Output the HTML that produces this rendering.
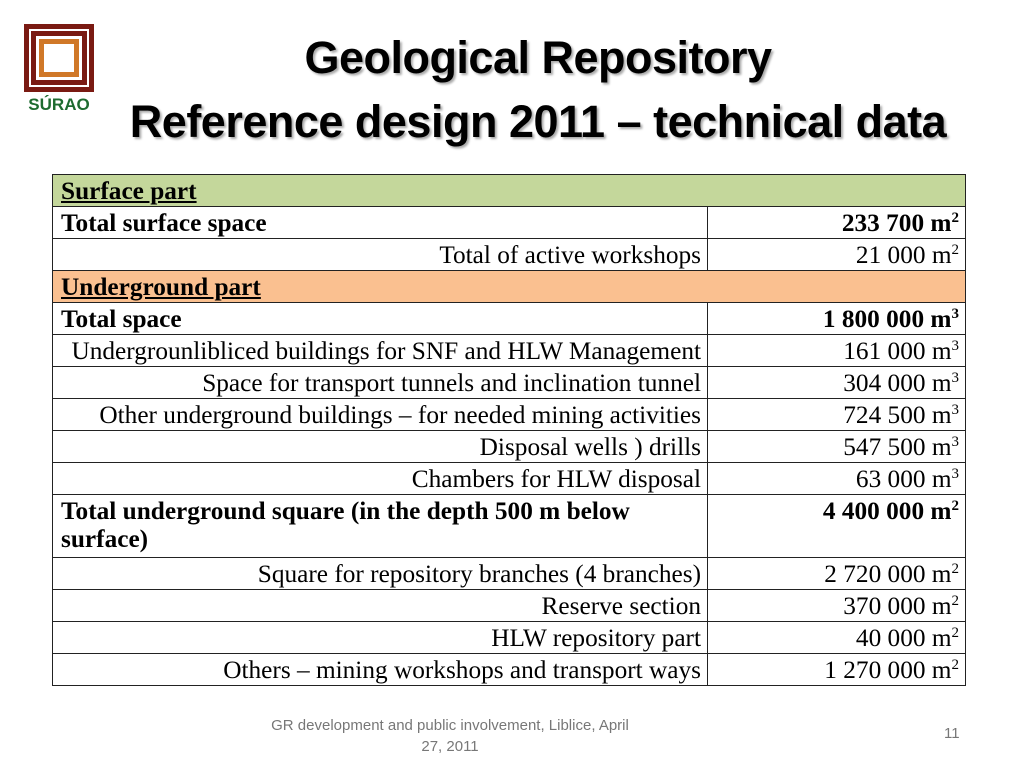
<!DOCTYPE html>
<html><head><meta charset="utf-8"><style>
body{margin:0;width:1024px;height:768px;background:#fff;position:relative;overflow:hidden;font-family:"Liberation Serif","Times New Roman",serif;}
.t{position:absolute;left:0;width:1076px;text-align:center;font-family:"Liberation Sans",sans-serif;font-weight:bold;font-size:45px;line-height:50px;color:#000;text-shadow:2px 2px 2px #aaa;letter-spacing:-0.5px;white-space:nowrap}
table{position:absolute;left:52px;top:174px;width:914px;border-collapse:collapse;font-size:25.3px}
td{border:1.5px solid #222;padding:0 6px 0 8px;height:31px;line-height:28px;vertical-align:middle;white-space:nowrap}
td:first-child{width:640px;text-align:right}
td:last-child{text-align:right}
.l{text-align:left!important}
.g td{background:#c4d79b}.o td{background:#fac090}
sup{font-size:15px;vertical-align:9px;line-height:0}
.f{position:absolute;font-family:"Liberation Sans",sans-serif;font-size:15px;color:#777}
</style></head><body>
<svg style="position:absolute;left:24px;top:24px" width="72" height="90">
<rect x="0" y="0" width="70" height="68" fill="#7a1a12"/>
<rect x="6" y="6" width="58" height="56" fill="none" stroke="#fff" stroke-width="2"/>
<rect x="12" y="12" width="46" height="44" fill="#fff"/>
<rect x="15" y="15" width="40" height="38" fill="#d07828"/>
<rect x="20" y="20" width="30" height="28" fill="#fff"/>
<text x="35" y="86" text-anchor="middle" font-family="Liberation Sans" font-weight="bold" font-size="17" fill="#1e6b30">SÚRAO</text>
</svg>
<div class="t" style="top:33px">Geological Repository</div>
<div class="t" style="top:97px">Reference design 2011 – technical data</div>
<table>
<tr class="g"><td class="l" colspan="2"><b><u>Surface part</u></b></td></tr>
<tr><td class="l"><b>Total surface space</b></td><td><b>233 700 m<sup>2</sup></b></td></tr>
<tr><td>Total of active workshops</td><td>21 000 m<sup>2</sup></td></tr>
<tr class="o"><td class="l" colspan="2"><b><u>Underground part</u></b></td></tr>
<tr><td class="l"><b>Total space</b></td><td><b>1 800 000 m<sup>3</sup></b></td></tr>
<tr><td>Undergrounlibliced buildings for SNF and HLW Management</td><td>161 000 m<sup>3</sup></td></tr>
<tr><td>Space for transport tunnels and inclination tunnel</td><td>304 000 m<sup>3</sup></td></tr>
<tr><td>Other underground buildings – for needed mining activities</td><td>724 500 m<sup>3</sup></td></tr>
<tr><td>Disposal wells ) drills</td><td>547 500 m<sup>3</sup></td></tr>
<tr><td>Chambers for HLW disposal</td><td>63 000 m<sup>3</sup></td></tr>
<tr><td class="l" style="height:60px;vertical-align:top;padding-top:2px;white-space:normal"><b>Total underground square (in the depth 500 m below surface)</b></td><td style="vertical-align:top;padding-top:2px"><b>4 400 000 m<sup>2</sup></b></td></tr>
<tr><td>Square for repository branches (4 branches)</td><td>2 720 000 m<sup>2</sup></td></tr>
<tr><td>Reserve section</td><td>370 000 m<sup>2</sup></td></tr>
<tr><td>HLW repository part</td><td>40 000 m<sup>2</sup></td></tr>
<tr><td>Others – mining workshops and transport ways</td><td>1 270 000 m<sup>2</sup></td></tr>
</table>
<div class="f" style="left:230px;top:715px;width:440px;text-align:center;line-height:21px">GR development and public involvement, Liblice, April<br>27, 2011</div>
<div class="f" style="left:944px;top:725px">11</div>
</body></html>
